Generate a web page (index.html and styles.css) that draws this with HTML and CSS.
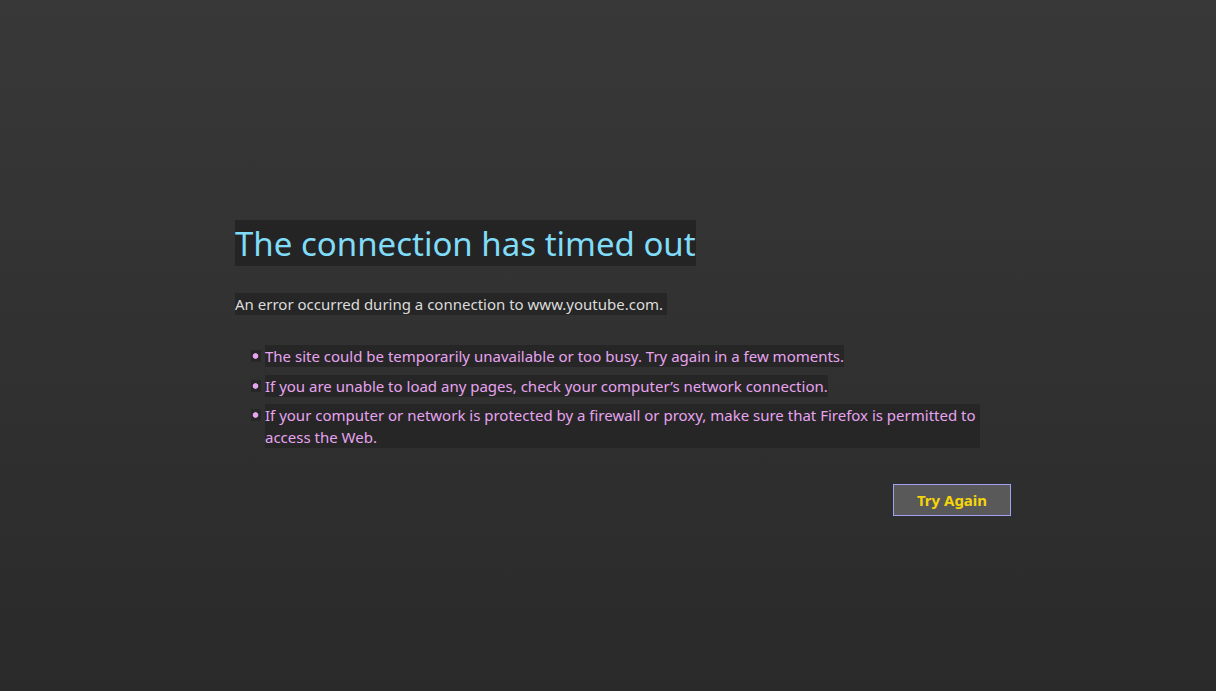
FILE: index.html
```html
<!DOCTYPE html>
<html lang="en">
<head>
<meta charset="utf-8">
<title>Problem loading page</title>
<link rel="stylesheet" href="styles.css">
</head>
<body>
<main class="page">
  <div class="container">
    <h1 class="title">The connection has timed out</h1>
    <p class="desc">An error occurred during a connection to www.youtube.com.</p>
    <ul class="tips">
      <li class="tip"><span class="tip-text">The site could be temporarily unavailable or too busy. Try again in a few moments.</span></li>
      <li class="tip"><span class="tip-text">If you are unable to load any pages, check your computer’s network connection.</span></li>
      <li class="tip"><span class="tip-text">If your computer or network is protected by a firewall or proxy, make sure that Firefox is permitted to access the Web.</span></li>
    </ul>
    <div class="actions">
      <button class="retry" type="button">Try Again</button>
    </div>
  </div>
</main>
</body>
</html>
```

FILE: styles.css
```css
html, body {
  margin: 0;
  padding: 0;
  height: 100%;
}

body {
  background: linear-gradient(to bottom, #383838 0%, #2a2a2a 100%);
  font-family: "Noto Sans", "Open Sans", sans-serif;
  font-size: 15px;
  color: #dcdcdc;
}

.page {
  min-height: 100%;
  box-sizing: border-box;
  padding: 220px 0 0 235px;
}

.container {
  width: 776px;
  display: flex;
  flex-direction: column;
  align-items: flex-start;
}

.title {
  margin: 0;
  font-size: 33px;
  font-weight: 400;
  line-height: 46px;
  padding-top: 1px;
  height: 45px;
  color: #80dcf8;
  background: #242424;
}

.desc {
  margin: 27px 0 0;
  line-height: 22px;
  color: #dcdcdc;
  background: #262626;
  padding-right: 4px;
}

.tips {
  list-style: none;
  margin: 30px 0 0;
  padding: 0 0 0 16px;
  display: flex;
  flex-direction: column;
  gap: 7.5px;
}

.tip {
  display: flex;
  align-items: flex-start;
  gap: 4px;
  line-height: 22px;
  color: #e6a4f0;
}

.tip::before {
  content: "";
  flex: none;
  width: 10px;
  height: 12px;
  margin-top: 5px;
  background: radial-gradient(circle at 45% 50%, #e6a4f0 0, #e6a4f0 2.4px, #262626 3.2px);
}

.tip-text {
  max-width: 715px;
  background: #262626;
}

.actions {
  align-self: stretch;
  display: flex;
  justify-content: flex-end;
  margin-top: 36px;
}

.retry {
  width: 118px;
  height: 32px;
  box-sizing: border-box;
  background: #595959;
  border: 1px solid #a0a2f2;
  border-radius: 0;
  color: #f5d50a;
  font-family: "Noto Sans", "Open Sans", sans-serif;
  font-size: 15px;
  font-weight: 700;
  padding: 0;
}
```
